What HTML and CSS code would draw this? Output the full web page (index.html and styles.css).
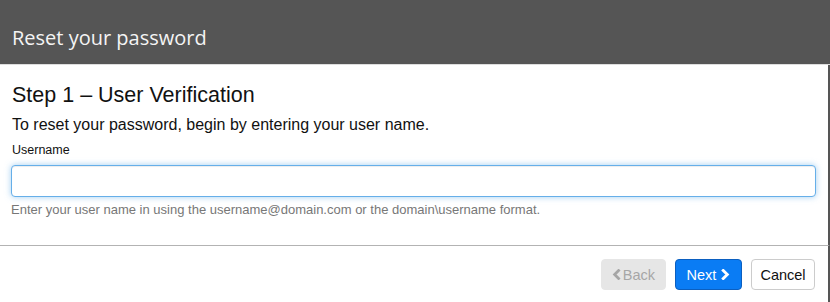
FILE: index.html
```html
<!DOCTYPE html>
<html lang="en">
<head>
  <meta charset="UTF-8" />
  <meta name="viewport" content="width=device-width, initial-scale=1.0" />
  <title>Reset your password</title>
  <link rel="stylesheet" href="styles.css">
</head>
<body>
  <div class="dialog">
    <header class="dialog-title">Reset your password</header>

    <main class="dialog-body">
      <h2 class="step-title">Step 1 – User Verification</h2>
      <p class="intro">To reset your password, begin by entering your user name.</p>

      <label class="field-label" for="username">Username</label>
      <input class="field-input" id="username" type="text" />
      <p class="field-help">Enter your user name in using the username@domain.com or the domain\username format.</p>
    </main>

    <footer class="dialog-footer">
      <button class="btn btn-back" disabled>
        <svg class="chev" viewBox="0 0 10 12" width="9" height="11"><path d="M7.5 1.5 L3 6 L7.5 10.5" /></svg>Back
      </button>
      <button class="btn btn-next">
        Next<svg class="chev" viewBox="0 0 10 12" width="9" height="11"><path d="M2.5 1.5 L7 6 L2.5 10.5" /></svg>
      </button>
      <button class="btn btn-cancel">Cancel</button>
    </footer>
  </div>
</body>
</html>
```

FILE: styles.css
```css
:root {
  --header-bg: #555555;
  --text-main: #111;
  --text-muted: #777;
  --focus-blue: #66afe9;
  --primary: #0a7cf4;
}

* {
  box-sizing: border-box;
}

body {
  margin: 0;
  width: 830px;
  height: 302px;
  font-family: "Liberation Sans", Arial, sans-serif;
  color: var(--text-main);
  background: #fff;
  overflow: hidden;
}

.dialog {
  display: flex;
  flex-direction: column;
  height: 302px;
}

.dialog-title {
  height: 65px;
  padding: 24px 12px 0;
  background: var(--header-bg);
  border-bottom: 1px solid #ddd;
  color: #f4f4f4;
  font-family: "Open Sans", "Noto Sans", sans-serif;
  font-size: 20px;
  line-height: 28px;
}

.dialog-body {
  padding: 19px 11px 0;
  border-right: 2px solid var(--header-bg);
  height: 181px;
  border-bottom: 1px solid #b3b3b3;
}

.step-title {
  margin: 0 0 9px 1px;
  font-size: 21.5px;
  font-weight: normal;
  line-height: 22px;
}

.intro {
  margin: 0 0 8px 1px;
  font-size: 16px;
  line-height: 20px;
}

.field-label {
  display: block;
  margin: 0 0 7px 1px;
  font-size: 12.5px;
  line-height: 15px;
}

.field-input {
  display: block;
  width: 805px;
  height: 32px;
  margin: 0;
  padding: 4px 8px;
  border: 1px solid var(--focus-blue);
  border-radius: 4px;
  outline: none;
  box-shadow: inset 0 1px 1px rgba(0, 0, 0, 0.075), 0 0 6px rgba(102, 175, 233, 0.6);
  font-family: inherit;
  font-size: 14px;
}

.field-help {
  margin: 5px 0 0;
  color: var(--text-muted);
  font-size: 13px;
  line-height: 15px;
}

.dialog-footer {
  flex: 1;
  display: flex;
  justify-content: flex-end;
  align-items: flex-start;
  gap: 9px;
  padding: 13px 13px 0 0;
  border-right: 2px solid var(--header-bg);
}

.btn {
  display: flex;
  align-items: center;
  justify-content: center;
  gap: 2px;
  height: 31px;
  padding: 0 10px;
  border: 1px solid transparent;
  border-radius: 4px;
  font-family: inherit;
  font-size: 14.5px;
  cursor: pointer;
}

.chev path {
  fill: none;
  stroke: currentColor;
  stroke-width: 3.2;
  stroke-linecap: square;
}

.btn-back {
  width: 65px;
  background: #e6e6e6;
  border-color: #e6e6e6;
  color: #a6a6a6;
  cursor: default;
}

.btn-next {
  width: 67px;
  gap: 5px;
  background: var(--primary);
  border-color: #0b5fc0;
  color: #fff;
}

.btn-cancel {
  width: 64px;
  background: #fff;
  border-color: #ccc;
  color: #111;
}
```
